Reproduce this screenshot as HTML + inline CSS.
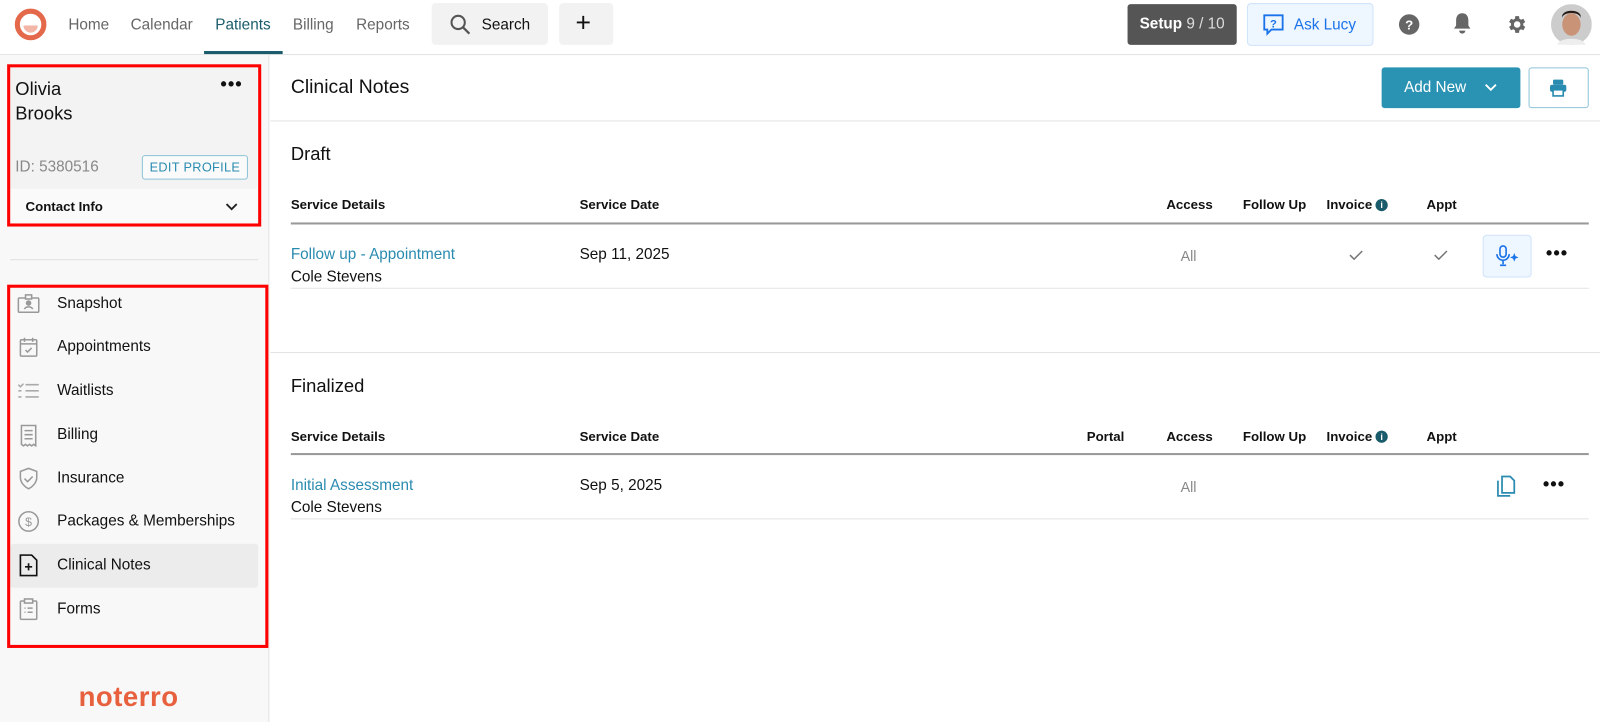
<!DOCTYPE html>
<html><head><meta charset="utf-8"><style>
*{box-sizing:border-box;margin:0;padding:0}
html,body{width:1600px;height:722px;overflow:hidden;background:#fff}
body{font-family:"Liberation Sans",Arial,sans-serif;color:#111;position:relative}
#w{position:absolute;left:0;top:0;width:1568px;height:708px;transform:scale(1.0204);transform-origin:0 0}
.a{position:absolute}
.t{white-space:nowrap}
.nav{font-size:15px;color:#666}
.hd{font-size:13px;font-weight:bold;color:#111}
.ni{position:absolute;left:56px;font-size:15px;color:#111}
.ic{position:absolute;left:17px}
</style></head><body><div id="w">
<!-- top bar -->
<div class="a" style="left:0;top:53px;width:1600px;height:1px;background:#e3e3e3"></div>
<svg class="a" style="left:14px;top:8px" width="32" height="32" viewBox="0 0 32 32"><circle cx="16" cy="16" r="13" fill="none" stroke="#e4684a" stroke-width="5"/><path d="M9 17a7 7 0 0 0 14 0z" fill="#f3b5a5"/></svg>
<div class="a t nav" style="left:67px;top:16px">Home</div>
<div class="a t nav" style="left:128px;top:16px">Calendar</div>
<div class="a t nav" style="left:211px;top:16px;color:#1a5c6b">Patients</div>
<div class="a" style="left:200px;top:50px;width:77px;height:3px;background:#1a5c6b"></div>
<div class="a t nav" style="left:287px;top:16px">Billing</div>
<div class="a t nav" style="left:349px;top:16px">Reports</div>
<div class="a" style="left:423px;top:3px;width:114px;height:41px;background:#f2f2f2;border-radius:4px"></div>
<svg class="a" style="left:440px;top:13px" width="22" height="22" viewBox="0 0 22 22"><circle cx="9" cy="9" r="6.5" fill="none" stroke="#555" stroke-width="2"/><path d="M14 14l6 6" stroke="#555" stroke-width="2.2"/></svg>
<div class="a t" style="left:472px;top:16px;font-size:15px">Search</div>
<div class="a" style="left:548px;top:3px;width:53px;height:41px;background:#f2f2f2;border-radius:4px"></div>
<div class="a t" style="left:564px;top:7px;font-size:26px;font-weight:300">+</div>
<div class="a t" style="left:1105px;top:4px;width:107px;height:40px;background:#555;border-radius:3px;color:#fff;font-size:15px;font-weight:bold;line-height:40px;text-align:center">Setup <span style="font-weight:normal;color:#ddd">9 / 10</span></div>
<div class="a" style="left:1222px;top:3px;width:124px;height:42px;background:#eef6ff;border:1px solid #cfe3fb;border-radius:4px"></div>
<svg class="a" style="left:1237px;top:13px" width="22" height="22" viewBox="0 0 22 22"><path d="M2 2h18v14H9l-4 4v-4H2z" fill="none" stroke="#1a73e8" stroke-width="1.8"/><text x="11" y="14" font-size="11" font-weight="bold" fill="#1a73e8" text-anchor="middle" font-family="Liberation Sans">?</text></svg>
<div class="a t" style="left:1268px;top:16px;font-size:15px;color:#1a73e8">Ask Lucy</div>
<svg class="a" style="left:1370px;top:13px" width="22" height="22" viewBox="0 0 22 22"><circle cx="11" cy="11" r="10" fill="#666"/><text x="11" y="16" font-size="13" font-weight="bold" fill="#fff" text-anchor="middle" font-family="Liberation Sans">?</text></svg>
<svg class="a" style="left:1423px;top:12px" width="20" height="22" viewBox="0 0 20 22"><path d="M10 1c-4 0-6 3-6 7v5l-2 3h16l-2-3V8c0-4-2-7-6-7z" fill="#666"/><path d="M7 18a3 3 0 0 0 6 0z" fill="#666"/></svg>
<svg class="a" style="left:1475px;top:13px" width="22" height="22" viewBox="0 0 24 24"><path fill="#666" d="M19.4 13a7.5 7.5 0 0 0 0-2l2.1-1.6-2-3.5-2.5 1a7.4 7.4 0 0 0-1.7-1L14.9 3h-4l-.4 2.9a7.4 7.4 0 0 0-1.7 1l-2.5-1-2 3.5L6.4 11a7.5 7.5 0 0 0 0 2l-2.1 1.6 2 3.5 2.5-1a7.4 7.4 0 0 0 1.7 1l.4 2.9h4l.4-2.9a7.4 7.4 0 0 0 1.7-1l2.5 1 2-3.5zM12.9 15.5a3.5 3.5 0 1 1 0-7 3.5 3.5 0 0 1 0 7z"/></svg>
<svg class="a" style="left:1520px;top:4px" width="40" height="40" viewBox="0 0 40 40"><circle cx="20" cy="20" r="20" fill="#ccc"/><ellipse cx="20" cy="20" rx="9" ry="11" fill="#c99378"/><path d="M11 14c0-7 18-7 18 0v-3c-2-6-16-6-18 0z" fill="#2a1d17"/><path d="M6 40c2-8 26-8 28 0z" fill="#eee"/></svg>

<!-- sidebar -->
<div class="a" style="left:0;top:54px;width:264px;height:668px;background:#f8f8f8;border-right:1px solid #e3e3e3"></div>
<div class="a" style="left:10px;top:66px;width:242px;height:119px;background:#f3f3f3"></div>
<div class="a" style="left:10px;top:185px;width:242px;height:33px;background:#fafafa"></div>
<div class="a t" style="left:15px;top:75px;font-size:18px;line-height:24px">Olivia<br>Brooks</div>
<div class="a t" style="left:216px;top:72px;font-size:18px;font-weight:bold;letter-spacing:1px">•••</div>
<div class="a t" style="left:15px;top:155px;font-size:15px;color:#888">ID: 5380516</div>
<div class="a t" style="left:139px;top:152px;width:104px;height:24px;border:1px solid #8cc3d6;border-radius:3px;font-size:12.5px;color:#2a8bb0;line-height:22px;text-align:center;letter-spacing:.3px;background:#fafafa">EDIT PROFILE</div>
<div class="a t" style="left:25px;top:195px;font-size:13px;font-weight:bold">Contact Info</div>
<svg class="a" style="left:220px;top:198px" width="14" height="10" viewBox="0 0 14 10"><path d="M2 2l5 5 5-5" fill="none" stroke="#222" stroke-width="1.8"/></svg>
<div class="a" style="left:7px;top:63px;width:249px;height:159px;border:3px solid #f00"></div>
<div class="a" style="left:10px;top:254px;width:243px;height:1px;background:#e0e0e0"></div>

<div class="a" style="left:10px;top:533px;width:243px;height:43px;background:#ececec;border-radius:3px"></div>
<div class="ni t" style="top:289px">Snapshot</div>
<div class="ni t" style="top:331px">Appointments</div>
<div class="ni t" style="top:374px">Waitlists</div>
<div class="ni t" style="top:417px">Billing</div>
<div class="ni t" style="top:460px">Insurance</div>
<div class="ni t" style="top:502px">Packages &amp; Memberships</div>
<div class="ni t" style="top:545px">Clinical Notes</div>
<div class="ni t" style="top:588px">Forms</div>
<svg class="ic" style="top:288px" width="22" height="20" viewBox="0 0 22 20" fill="none" stroke="#999" stroke-width="1.5"><rect x="1" y="4" width="20" height="14" rx="1"/><rect x="8" y="1" width="6" height="4" fill="#f8f8f8"/><circle cx="11" cy="9" r="2" fill="#999"/><path d="M7 15c1-3 7-3 8 0"/></svg>
<svg class="ic" style="left:19px;top:330px" width="18" height="20" viewBox="0 0 18 20" fill="none" stroke="#999" stroke-width="1.5"><rect x="1" y="3" width="16" height="16" rx="1"/><path d="M5 1v4M13 1v4M1 7h16M6 13l2 2 4-4"/></svg>
<svg class="ic" style="top:374px" width="22" height="18" viewBox="0 0 22 18" fill="none" stroke="#aaa" stroke-width="1.5"><path d="M1 3l2 2 3-3M8 3h13M1 9h3M8 9h13M1 15h3M8 15h13"/></svg>
<svg class="ic" style="left:19px;top:416px" width="18" height="22" viewBox="0 0 18 22" fill="none" stroke="#999" stroke-width="1.5"><path d="M2 1h14v20l-2-1.5-2 1.5-2-1.5-2 1.5-2-1.5-2 1.5-2-1.5z"/><path d="M5 6h8M5 10h8M5 14h8"/></svg>
<svg class="ic" style="left:18px;top:458px" width="20" height="22" viewBox="0 0 20 22" fill="none" stroke="#999" stroke-width="1.5"><path d="M10 1l8 3v6c0 5-4 9-8 11-4-2-8-6-8-11V4z"/><path d="M6 11l3 3 5-5"/></svg>
<svg class="ic" style="left:17px;top:500px" width="22" height="22" viewBox="0 0 22 22" fill="none" stroke="#999" stroke-width="1.5"><circle cx="11" cy="11" r="9.5"/><text x="11" y="15.5" font-size="12" fill="#999" stroke="none" text-anchor="middle" font-family="Liberation Sans">$</text></svg>
<svg class="ic" style="left:19px;top:543px" width="18" height="22" viewBox="0 0 18 22" fill="none" stroke="#111" stroke-width="1.6"><path d="M1 1h11l5 5v15H1z"/><path d="M9 9v7M5.5 12.5h7"/></svg>
<svg class="ic" style="left:19px;top:586px" width="18" height="22" viewBox="0 0 18 22" fill="none" stroke="#999" stroke-width="1.5"><rect x="1" y="3" width="16" height="18" rx="1"/><rect x="5" y="1" width="8" height="4" fill="#f8f8f8"/><path d="M5 10h1M8 10h5M5 14h1M8 14h5"/></svg>
<div class="a" style="left:7px;top:279px;width:256px;height:356px;border:3px solid #f00"></div>
<div class="a t" style="left:77px;top:668px;font-size:27px;color:#e8613f;letter-spacing:.5px;font-weight:bold;-webkit-text-stroke:0">noterro</div>

<!-- main -->
<div class="a t" style="left:285px;top:75px;font-size:19px">Clinical Notes</div>
<div class="a" style="left:1354px;top:66px;width:136px;height:40px;background:#2a93b3;border-radius:3px"></div>
<div class="a t" style="left:1376px;top:77px;font-size:15px;color:#fff">Add New</div>
<svg class="a" style="left:1454px;top:81px" width="14" height="10" viewBox="0 0 14 10"><path d="M2 2l5 5 5-5" fill="none" stroke="#fff" stroke-width="1.8"/></svg>
<div class="a" style="left:1498px;top:66px;width:59px;height:40px;border:1px solid #8cc3d6;border-radius:3px"></div>
<svg class="a" style="left:1518px;top:77px" width="18" height="18" viewBox="0 0 18 18" fill="#2a8bb0"><rect x="4" y="1" width="10" height="5" rx="1"/><rect x="1" y="6" width="16" height="7" rx="2"/><rect x="4" y="11" width="10" height="6" fill="#fff" stroke="#2a8bb0" stroke-width="1.6"/></svg>
<div class="a" style="left:265px;top:118px;width:1335px;height:1px;background:#e3e3e3"></div>

<div class="a t" style="left:285px;top:141px;font-size:18px">Draft</div>
<div class="a t hd" style="left:285px;top:193px">Service Details</div>
<div class="a t hd" style="left:568px;top:193px">Service Date</div>
<div class="a t hd" style="left:1143px;top:193px">Access</div>
<div class="a t hd" style="left:1218px;top:193px">Follow Up</div>
<div class="a t hd" style="left:1300px;top:193px">Invoice</div>
<div class="a" style="left:1348px;top:195px;width:12px;height:12px;border-radius:6px;background:#1a5c6b;color:#fff;font-size:9px;font-weight:bold;text-align:center;line-height:12px">i</div>
<div class="a t hd" style="left:1398px;top:193px">Appt</div>
<div class="a" style="left:285px;top:218px;width:1272px;height:2px;background:#999"></div>
<div class="a t" style="left:285px;top:241px;font-size:15px;color:#2a8bb0">Follow up - Appointment</div>
<div class="a t" style="left:285px;top:263px;font-size:15px">Cole Stevens</div>
<div class="a t" style="left:568px;top:241px;font-size:15px">Sep 11, 2025</div>
<div class="a t" style="left:1157px;top:243px;font-size:14px;color:#888">All</div>
<svg class="a" style="left:1322px;top:245px" width="14" height="10" viewBox="0 0 14 10"><path d="M1 5l4 4 8-8" fill="none" stroke="#777" stroke-width="1.5"/></svg>
<svg class="a" style="left:1405px;top:245px" width="14" height="10" viewBox="0 0 14 10"><path d="M1 5l4 4 8-8" fill="none" stroke="#777" stroke-width="1.5"/></svg>
<div class="a" style="left:1453px;top:230px;width:48px;height:42px;background:#eef6ff;border:1px solid #cfe3fb;border-radius:4px"></div>
<svg class="a" style="left:1465px;top:240px" width="26" height="22" viewBox="0 0 26 22" fill="none" stroke="#1a73e8" stroke-width="1.6"><rect x="5" y="1" width="6" height="11" rx="3"/><path d="M2 9a6 6 0 0 0 12 0M8 15v4M5 20h6"/><path d="M19 8l1.2 3 3 1.2-3 1.2-1.2 3-1.2-3-3-1.2 3-1.2z" fill="#1a73e8" stroke="none"/></svg>
<div class="a t" style="left:1515px;top:238px;font-size:18px;font-weight:bold;letter-spacing:1px">•••</div>
<div class="a" style="left:285px;top:282px;width:1272px;height:1px;background:#e3e3e3"></div>
<div class="a" style="left:265px;top:345px;width:1335px;height:1px;background:#e3e3e3"></div>

<div class="a t" style="left:285px;top:368px;font-size:18px">Finalized</div>
<div class="a t hd" style="left:285px;top:420px">Service Details</div>
<div class="a t hd" style="left:568px;top:420px">Service Date</div>
<div class="a t hd" style="left:1065px;top:420px">Portal</div>
<div class="a t hd" style="left:1143px;top:420px">Access</div>
<div class="a t hd" style="left:1218px;top:420px">Follow Up</div>
<div class="a t hd" style="left:1300px;top:420px">Invoice</div>
<div class="a" style="left:1348px;top:422px;width:12px;height:12px;border-radius:6px;background:#1a5c6b;color:#fff;font-size:9px;font-weight:bold;text-align:center;line-height:12px">i</div>
<div class="a t hd" style="left:1398px;top:420px">Appt</div>
<div class="a" style="left:285px;top:444px;width:1272px;height:2px;background:#999"></div>
<div class="a t" style="left:285px;top:467px;font-size:15px;color:#2a8bb0">Initial Assessment</div>
<div class="a t" style="left:285px;top:489px;font-size:15px">Cole Stevens</div>
<div class="a t" style="left:568px;top:467px;font-size:15px">Sep 5, 2025</div>
<div class="a t" style="left:1157px;top:469px;font-size:14px;color:#888">All</div>
<svg class="a" style="left:1466px;top:466px" width="20" height="22" viewBox="0 0 20 22" fill="none" stroke="#2a8bb0" stroke-width="1.7"><path d="M2 5v15h12"/><path d="M6 1h8l4 4v12H6z"/></svg>
<div class="a t" style="left:1512px;top:464px;font-size:18px;font-weight:bold;letter-spacing:1px">•••</div>
<div class="a" style="left:285px;top:508px;width:1272px;height:1px;background:#e3e3e3"></div>
</div></body></html>
